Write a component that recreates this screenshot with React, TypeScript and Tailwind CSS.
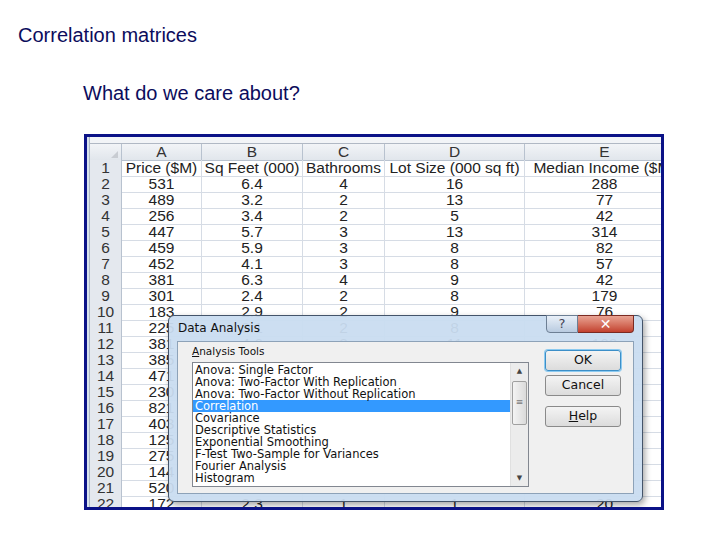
const rows: string[][] = [
  ["531", "6.4", "4", "16", "288"],
  ["489", "3.2", "2", "13", "77"],
  ["256", "3.4", "2", "5", "42"],
  ["447", "5.7", "3", "13", "314"],
  ["459", "5.9", "3", "8", "82"],
  ["452", "4.1", "3", "8", "57"],
  ["381", "6.3", "4", "9", "42"],
  ["301", "2.4", "2", "8", "179"],
  ["183", "2.9", "2", "9", "76"],
  ["225", "3.1", "2", "8", "41"],
  ["381", "4.6", "3", "11", "102"],
  ["385", "5.2", "3", "10", "96"],
  ["471", "5.4", "3", "12", "143"],
  ["230", "2.8", "2", "6", "39"],
  ["821", "7.6", "5", "22", "410"],
  ["403", "4.4", "3", "9", "88"],
  ["125", "1.9", "1", "4", "21"],
  ["275", "3.0", "2", "7", "60"],
  ["144", "2.1", "1", "5", "33"],
  ["520", "6.1", "4", "14", "205"],
  ["172", "2.3", "1", "1", "20"],
];

const cols = "grid grid-cols-[32px_80px_101px_82px_140px_160px]";

const tools = [
  "Anova: Single Factor",
  "Anova: Two-Factor With Replication",
  "Anova: Two-Factor Without Replication",
  "Correlation",
  "Covariance",
  "Descriptive Statistics",
  "Exponential Smoothing",
  "F-Test Two-Sample for Variances",
  "Fourier Analysis",
  "Histogram",
];

function Row({ n, cells }: { n: number; cells: string[] }) {
  return (
    <div className={`${cols} h-4 leading-4`}>
      <div className="bg-[#e4e8ee] border-r border-b border-[#b8c2cf] text-center text-[#333]">{n}</div>
      {cells.map((c, i) => (
        <div key={i} className="border-r border-b border-[#d6dce5] text-center whitespace-nowrap overflow-hidden">
          {c}
        </div>
      ))}
    </div>
  );
}

function Btn({ label, focus }: { label: React.ReactNode; focus?: boolean }) {
  return (
    <div
      className={`w-[76px] h-[21px] rounded-[3px] flex items-center justify-center text-[12.5px] text-[#111] bg-gradient-to-b from-[#f4f4f4] to-[#dcdcdc] border ${
        focus ? "border-[#3c8fc8] shadow-[0_0_0_1px_#8ccaf0]" : "border-[#8a8a8a]"
      }`}
    >
      {label}
    </div>
  );
}

function Dialog() {
  return (
    <div className="absolute left-[81px] top-[178px] w-[475px] h-[187px] rounded-[6px] border border-[#44546a] bg-[#c9dcf0]/95 shadow-[2px_3px_6px_rgba(0,0,0,0.35)] font-['DejaVu_Sans',sans-serif]">
      <div className="h-[24px] flex items-center pl-[9px] text-[12px] text-[#111]">Data Analysis</div>
      <div className="absolute right-[8px] top-[-1px] flex">
        <div className="w-[32px] h-[18px] rounded-bl-[4px] border border-[#6d7f94] bg-gradient-to-b from-[#e9f0f8] to-[#b9cbe0] flex items-center justify-center text-[13px] text-[#445]">
          ?
        </div>
        <div className="w-[56px] h-[18px] rounded-br-[4px] border border-l-0 border-[#7a2a22] bg-gradient-to-b from-[#e8a393] to-[#c2402e] flex items-center justify-center text-white text-[14px] font-bold">
          ✕
        </div>
      </div>
      <div className="absolute left-[8px] right-[8px] top-[25px] bottom-[7px] bg-[#f0f0f0] border border-[#8da2b8] flex">
        <div className="pl-[14px] pt-[2px]">
          <div className="text-[10.5px] leading-[14px] text-[#111] mb-[4px]">
            <span className="underline">A</span>nalysis Tools
          </div>
          <div className="w-[337px] h-[125px] bg-white border border-[#828790] flex">
            <div className="flex-1 pt-[1px] text-[11.5px] leading-[12px] text-[#111] overflow-hidden">
              {tools.map((t) => (
                <div key={t} className={`pl-[2px] whitespace-nowrap ${t === "Correlation" ? "bg-[#3399ff] text-white" : ""}`}>
                  {t}
                </div>
              ))}
            </div>
            <div className="w-[18px] bg-[#ececec] border-l border-[#e0e0e0] flex flex-col items-center">
              <div className="h-[16px] flex items-center text-[7px] text-[#444]">▲</div>
              <div className="w-[15px] h-[44px] mt-[2px] rounded-[2px] border border-[#a0a0a0] bg-gradient-to-r from-[#f4f4f4] to-[#dadada] flex items-center justify-center text-[9px] text-[#777]">
                ≡
              </div>
              <div className="flex-1" />
              <div className="h-[16px] flex items-center text-[7px] text-[#444]">▼</div>
            </div>
          </div>
        </div>
        <div className="pl-[16px] pt-[8px] flex flex-col">
          <Btn label="OK" focus />
          <div className="h-[4px]" />
          <Btn label="Cancel" />
          <div className="h-[10px]" />
          <Btn label={<><span className="underline">H</span>elp</>} />
        </div>
      </div>
    </div>
  );
}

export default function App() {
  return (
    <div className="w-[720px] h-[540px] bg-white font-['Liberation_Sans',Arial,sans-serif] text-[#0c0c5c] overflow-hidden">
      <div className="pl-[18px] pt-[23px] text-[20px] leading-[24px]">Correlation matrices</div>
      <div className="pl-[83px] pt-[34px] text-[20px] leading-[24px]">What do we care about?</div>
      <div className="ml-[84px] mt-[29px] w-[580px] h-[376px] border-[3px] border-[#0b1287] relative overflow-hidden bg-white">
        <div className="flex h-full">
          <div className="w-[3px] bg-[#d7e1ec] border-r border-[#aab6c4]" />
          <div className="flex-1 text-[15.5px] text-[#222] overflow-hidden">
            <div className="h-[7px] bg-[#f2f4f7] border-b border-[#b0b8c4]" />
            <div className={`${cols} h-4 leading-4 bg-gradient-to-b from-[#f2f4f7] to-[#e1e6ec]`}>
              <div className="border-r border-b border-[#b8c2cf] flex items-end justify-end pr-[3px] pb-[2px]">
                <div className="w-0 h-0 border-l-[7px] border-l-transparent border-b-[7px] border-b-[#c8ccd2]" />
              </div>
              {["A", "B", "C", "D", "E"].map((l) => (
                <div key={l} className="border-r border-b border-[#b8c2cf] text-center text-[#333]">
                  {l}
                </div>
              ))}
            </div>
            <Row n={1} cells={["Price ($M)", "Sq Feet (000)", "Bathrooms", "Lot Size (000 sq ft)", "Median Income ($M)"]} />
            {rows.map((r, i) => (
              <Row key={i} n={i + 2} cells={r} />
            ))}
          </div>
        </div>
        <Dialog />
      </div>
    </div>
  );
}
